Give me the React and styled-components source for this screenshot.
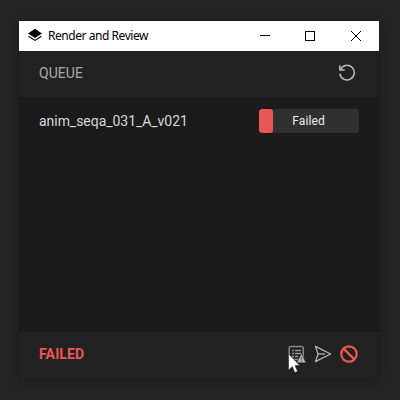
import React from "react";
import styled, { createGlobalStyle } from "styled-components";

const GlobalStyle = createGlobalStyle`
  * { box-sizing: border-box; }
  body { margin: 0; background: #252525; overflow: hidden; }
  svg { display: block; flex: none; }
`;

const Desktop = styled.main`
  height: 400px;
  width: 400px;
  padding: 21px 21px 21px 19px;
  background: #252525;
  font-family: Roboto, "Liberation Sans", sans-serif;
`;

const Window = styled.section`
  width: 360px;
  height: 358px;
  display: flex;
  flex-direction: column;
  background: #212121;
  box-shadow: 0 2px 14px rgba(0, 0, 0, 0.28), 0 0 0 1px #222;
`;

const TitleBar = styled.header`
  height: 30px;
  flex: none;
  display: flex;
  align-items: center;
  padding-left: 8px;
  background: #fff;
`;

const Title = styled.h1`
  flex: 1;
  margin: 0 0 0 5px;
  font: 400 12px/16px "Noto Sans", "Open Sans", sans-serif;
  letter-spacing: -0.45px;
  color: #000;
  white-space: nowrap;
`;

const WindowButton = styled.button`
  width: ${(p) => p.$width || 46}px;
  height: 30px;
  padding: 0;
  border: 0;
  background: none;
  display: flex;
  align-items: center;
  justify-content: center;
`;

const Bar = styled.div`
  height: ${(p) => p.$height}px;
  flex: none;
  display: flex;
  align-items: center;
  justify-content: space-between;
  padding: 0 ${(p) => p.$end}px ${(p) => p.$bottom}px 20px;
`;

const Label = styled.span`
  font-size: 14px;
  line-height: 20px;
  letter-spacing: ${(p) => p.$spacing || "0"};
  font-weight: ${(p) => (p.$error ? 700 : 400)};
  color: ${(p) => (p.$error ? "#ec5555" : "#a9a9ad")};
`;

const IconButton = styled.button`
  width: 18px;
  height: 18px;
  padding: 0;
  border: 0;
  background: none;
  color: #b9b9bd;
`;

const Queue = styled.div`
  flex: 1;
  padding: 12px 20px;
  background: #1b1b1b;
`;

const QueueRow = styled.div`
  height: 24px;
  display: flex;
  align-items: center;
  justify-content: space-between;
`;

const JobName = styled.span`
  font-size: 14px;
  line-height: 20px;
  letter-spacing: -0.04px;
  color: #d8d8d8;
`;

const Progress = styled.div`
  width: 100px;
  height: 24px;
  display: flex;
  border-radius: 3px;
  overflow: hidden;
  background: #303030;
`;

const ProgressFill = styled.div`
  width: 14px;
  border-radius: 3px;
  background: #eb5757;
`;

const ProgressText = styled.span`
  width: 71px;
  text-align: center;
  font-size: 12px;
  line-height: 24px;
  letter-spacing: 0.1px;
  color: #eee;
`;

const Actions = styled.div`
  display: flex;
  align-items: center;
  gap: 8px;
`;

const Cursor = styled.svg`
  position: absolute;
  left: 288px;
  top: 353px;
`;

const LayersIcon = () => (
  <svg width="16" height="16" viewBox="0 0 16 16">
    <path d="M8 .8 15 5.4 8 10 1 5.4Z" fill="#000" />
    <path d="M1.5 8.2 8 12.4l6.5-4.2" fill="none" stroke="#000" strokeWidth="1.1" />
  </svg>
);

const ReloadIcon = () => (
  <svg width="18" height="18" viewBox="0 0 18 18" fill="none" stroke="currentColor" strokeWidth="1.5">
    <path d="M1.8 1.2V6h4.9" />
    <path d="M2.4 5.6A7.3 7.3 0 1 1 1.8 9.6" />
  </svg>
);

const LogIcon = () => (
  <svg width="18" height="18" viewBox="0 0 18 18">
    <rect x="1.2" y="1.5" width="14" height="13" rx="1.6" fill="none" stroke="#8f8792" strokeWidth="1.5" />
    <path d="M4 5.5h2M4 8.5h2M4 11.5h2M7 5.5h6M7 8.5h6M7 11.5h3" stroke="#9c959e" strokeWidth="1.4" />
    <path d="M13.4 8.3 18 17.8H8.8Z" fill="#b5b7b5" stroke="#212121" strokeWidth=".5" />
    <path d="M13.4 12v2.6M13.4 15.5v1.1" stroke="#555" strokeWidth="1" />
  </svg>
);

const SendIcon = () => (
  <svg width="18" height="18" viewBox="0 0 18 18" fill="none" stroke="currentColor" strokeWidth="1.25" strokeLinejoin="round">
    <path d="M1.4 1.4 16.6 9 1.4 16.6 4.1 9Z" />
    <path d="M4.1 9H11" />
  </svg>
);

const BanIcon = () => (
  <svg width="18" height="18" viewBox="0 0 18 18" fill="none" stroke="#ed5a52" strokeWidth="2.2">
    <circle cx="9" cy="9" r="7.7" />
    <path d="m3.6 3.6 10.8 10.8" />
  </svg>
);

export default function App() {
  return (
    <Desktop>
      <GlobalStyle />
      <Window>
        <TitleBar>
          <LayersIcon />
          <Title>Render and Review</Title>
          <WindowButton aria-label="Minimize" $width={44}>
            <svg width="10" height="10"><path d="M0 4.5h10" stroke="#000" /></svg>
          </WindowButton>
          <WindowButton aria-label="Maximize">
            <svg width="10" height="10"><rect x=".5" y=".5" width="9" height="9" fill="none" stroke="#000" /></svg>
          </WindowButton>
          <WindowButton aria-label="Close">
            <svg width="10" height="10"><path d="m0 0 10 10M10 0 0 10" stroke="#000" /></svg>
          </WindowButton>
        </TitleBar>
        <Bar $height={46} $end={23} $bottom={2}>
          <Label $spacing="0.05px">QUEUE</Label>
          <Actions>
            <IconButton aria-label="Reload"><ReloadIcon /></IconButton>
          </Actions>
        </Bar>
        <Queue>
          <QueueRow>
            <JobName>anim_seqa_031_A_v021</JobName>
            <Progress>
              <ProgressFill />
              <ProgressText>Failed</ProgressText>
            </Progress>
          </QueueRow>
        </Queue>
        <Bar $height={47} $end={21} $bottom={3}>
          <Label $error $spacing="0.15px">FAILED</Label>
          <Actions>
            <IconButton aria-label="Show log"><LogIcon /></IconButton>
            <IconButton aria-label="Send"><SendIcon /></IconButton>
            <IconButton aria-label="Cancel"><BanIcon /></IconButton>
          </Actions>
        </Bar>
      </Window>
      <Cursor width="13" height="21" viewBox="0 0 13 21">
        <path d="M.5.8v16.4l3.8-3.6 2.5 6 2.8-1.2-2.5-5.8h4.6Z" fill="#fff" stroke="#111" strokeWidth=".5" />
      </Cursor>
    </Desktop>
  );
}
